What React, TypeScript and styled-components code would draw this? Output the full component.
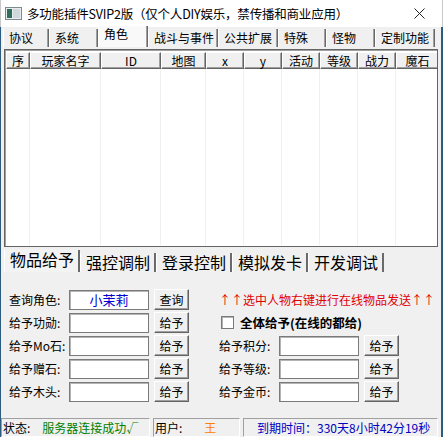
import styled, { createGlobalStyle } from 'styled-components';

const GlobalStyle = createGlobalStyle`
  html, body { margin: 0; padding: 0; background: #f0f0f0; }
  body { font-family: "Noto Sans CJK SC", "Noto Sans", sans-serif; }
  * { box-sizing: border-box; }
`;

const Window = styled.div`
  width: 443px;
  height: 437px;
  display: flex;
  flex-direction: column;
  background: #f0f0f0;
  overflow: hidden;
`;

const TitleBar = styled.div`
  height: 27px;
  flex: none;
  display: flex;
  align-items: center;
  background: #fff;
  padding-left: 4px;
  border-left: 1px solid #c8c8c8;
  border-right: 1px solid #c8c8c8;
`;

const TitleText = styled.div`
  margin-left: 5px;
  font-size: 12.5px;
  line-height: 16px;
  color: #000;
  white-space: nowrap;
  letter-spacing: -0.2px;
`;

const CloseBox = styled.div`
  margin-left: auto;
  width: 46px;
  height: 27px;
  display: flex;
  align-items: center;
  justify-content: center;
`;

const Body = styled.div`
  flex: 1;
  display: flex;
  flex-direction: column;
  border-left: 1px solid #2b5c80;
  border-right: 2px solid #2b5c80;
  min-height: 0;
`;

const TabStrip = styled.div`
  height: 20px;
  flex: none;
  display: flex;
  align-items: flex-end;
  padding-left: 2px;
`;

const TopTab = styled.div<{ $w: number; $active?: boolean }>`
  width: ${p => p.$w}px;
  height: ${p => (p.$active ? 21 : 18)}px;
  padding-left: 5px;
  font-size: 12px;
  line-height: ${p => (p.$active ? 16 : 18)}px;
  white-space: nowrap;
  background: ${p => (p.$active ? '#f9f9f9' : '#f0f0f0')};
  border-left: 1px solid #fff;
  border-right: 1px solid #6a6a6a;
  box-shadow: inset -1px 0 0 #a0a0a0;
  color: #000;
`;

const TableBox = styled.div`
  margin: 2px 3px 0 3px;
  height: 198px;
  flex: none;
  background: #fff;
  border: 1px solid #646464;
  box-shadow: inset 1px 1px 0 #a0a0a0;
  padding: 2px 1px 1px 1px;
  display: flex;
  flex-direction: column;
  overflow: hidden;
`;

const HeaderRow = styled.div`
  display: flex;
  height: 17px;
  flex: none;
`;

const HeadCell = styled.div<{ $w: number }>`
  width: ${p => p.$w}px;
  flex: none;
  font-size: 12px;
  line-height: 15px;
  text-align: center;
  background: #f0f0f0;
  border-top: 1px solid #fff;
  border-left: 1px solid #fff;
  border-right: 1px solid #646464;
  border-bottom: 1px solid #646464;
  box-shadow: inset -1px -1px 0 #a0a0a0;
  font-family: "Noto Sans CJK SC", "Liberation Mono", monospace;
`;

const GridBody = styled.div`
  flex: 1;
  display: flex;
`;

const GridCol = styled.div<{ $w: number }>`
  width: ${p => p.$w}px;
  flex: none;
  border-right: 1px solid #f0f0f0;
`;

const BottomTabs = styled.div`
  height: 25px;
  flex: none;
  display: flex;
  align-items: flex-end;
  padding-left: 3px;
`;

const BigTab = styled.div<{ $active?: boolean }>`
  height: ${p => (p.$active ? 22 : 19)}px;
  padding: 0 4px 0 5px;
  font-size: 16px;
  line-height: ${p => (p.$active ? 18 : 19)}px;
  white-space: nowrap;
  color: #000;
  background: ${p => (p.$active ? '#f3f3f3' : '#f0f0f0')};
  border-right: 2px solid #6a6a6a;
  border-left: 1px solid #fff;
`;

const Panel = styled.div`
  flex: 1;
  display: flex;
  padding: 16px 0 0 8px;
  gap: 30px;
`;

const Column = styled.div`
  display: flex;
  flex-direction: column;
`;

const Row = styled.div`
  height: 23px;
  display: flex;
  align-items: center;
`;

const Label = styled.div`
  width: 60px;
  font-size: 12px;
  line-height: 16px;
  white-space: nowrap;
  color: #000;
`;

const Field = styled.div<{ $color?: string }>`
  width: 80px;
  height: 20px;
  background: #fff;
  border: 1px solid #7a7a7a;
  box-shadow: inset 1px 1px 0 #b4b4b4;
  font-size: 13px;
  line-height: 18px;
  text-align: center;
  color: ${p => p.$color || '#000'};
`;

const Button = styled.button`
  margin-left: 5px;
  width: 35px;
  height: 21px;
  padding: 0;
  font-family: inherit;
  font-size: 12px;
  line-height: 17px;
  color: #000;
  background: #f0f0f0;
  border: 1px solid;
  border-color: #fff #646464 #646464 #fff;
  box-shadow: inset -1px -1px 0 #a0a0a0;
`;

const Notice = styled.div`
  font-size: 12px;
  line-height: 16px;
  color: #e00000;
  white-space: nowrap;
  padding-top: 1px;
`;

const CheckRow = styled(Row)`
  gap: 6px;
  padding-left: 2px;
`;

const CheckBox = styled.div`
  width: 13px;
  height: 13px;
  background: #fff;
  border: 1px solid #7a7a7a;
  box-shadow: inset 1px 1px 0 #b4b4b4;
`;

const BoldLabel = styled.div`
  font-size: 12.5px;
  font-weight: bold;
  line-height: 16px;
  color: #000;
`;

const StatusBar = styled.div`
  height: 19px;
  flex: none;
  display: flex;
  gap: 3px;
  padding: 0 1px 0 0;
`;

const StatusPane = styled.div<{ $w: number }>`
  width: ${p => p.$w}px;
  flex: none;
  display: flex;
  align-items: center;
  font-size: 12px;
  line-height: 16px;
  white-space: nowrap;
  border-top: 1px solid #a0a0a0;
  border-left: 1px solid #a0a0a0;
  border-right: 1px solid #fff;
  border-bottom: 1px solid #fff;
  padding-left: 1px;
`;

const StatusText = styled.span<{ $color?: string; $gap?: number }>`
  color: ${p => p.$color || '#000'};
  margin-left: ${p => p.$gap || 0}px;
`;

const topTabs: [string, number][] = [
  ['协议', 46],
  ['系统', 49],
  ['角色', 50],
  ['战斗与事件', 70],
  ['公共扩展', 60],
  ['特殊', 48],
  ['怪物', 49],
  ['定制功能', 60],
];

const columns: [string, number][] = [
  ['序', 24],
  ['玩家名字', 71],
  ['ID', 60],
  ['地图', 45],
  ['x', 38],
  ['y', 38],
  ['活动', 38],
  ['等级', 38],
  ['战力', 38],
  ['魔石', 43],
];

const bottomTabs = ['物品给予', '强控调制', '登录控制', '模拟发卡', '开发调试'];

const AppIcon = () => (
  <svg width="17" height="13" viewBox="0 0 17 13">
    <rect x="0.5" y="0.5" width="16" height="12" fill="#e8eef0" stroke="#7d8a90" />
    <rect x="2" y="2" width="5" height="9" fill="#2f6f5a" />
    <rect x="8" y="2" width="7" height="9" fill="#cfd8dc" />
  </svg>
);

const CloseIcon = () => (
  <svg width="11" height="11" viewBox="0 0 11 11">
    <path d="M0.5 0.5 L10.5 10.5 M10.5 0.5 L0.5 10.5" stroke="#222" strokeWidth="1" />
  </svg>
);

export default function App() {
  return (
    <Window>
      <GlobalStyle />
      <TitleBar>
        <AppIcon />
        <TitleText>多功能插件SVIP2版（仅个人DIY娱乐，禁传播和商业应用）</TitleText>
        <CloseBox>
          <CloseIcon />
        </CloseBox>
      </TitleBar>
      <Body>
        <TabStrip>
          {topTabs.map(([name, w]) => (
            <TopTab key={name} $w={w} $active={name === '角色'}>
              {name}
            </TopTab>
          ))}
        </TabStrip>

        <TableBox>
          <HeaderRow>
            {columns.map(([name, w]) => (
              <HeadCell key={name} $w={w}>
                {name}
              </HeadCell>
            ))}
          </HeaderRow>
          <GridBody>
            {columns.map(([name, w]) => (
              <GridCol key={name} $w={w} />
            ))}
          </GridBody>
        </TableBox>

        <BottomTabs>
          {bottomTabs.map(name => (
            <BigTab key={name} $active={name === '物品给予'}>
              {name}
            </BigTab>
          ))}
        </BottomTabs>

        <Panel>
          <Column>
            <Row>
              <Label>查询角色:</Label>
              <Field $color="#0000d0">小茉莉</Field>
              <Button>查询</Button>
            </Row>
            <Row>
              <Label>给予功勋:</Label>
              <Field />
              <Button>给予</Button>
            </Row>
            <Row>
              <Label>给予Mo石:</Label>
              <Field />
              <Button>给予</Button>
            </Row>
            <Row>
              <Label>给予赠石:</Label>
              <Field />
              <Button>给予</Button>
            </Row>
            <Row>
              <Label>给予木头:</Label>
              <Field />
              <Button>给予</Button>
            </Row>
          </Column>
          <Column>
            <Row>
              <Notice>↑↑选中人物右键进行在线物品发送↑↑</Notice>
            </Row>
            <CheckRow>
              <CheckBox />
              <BoldLabel>全体给予(在线的都给)</BoldLabel>
            </CheckRow>
            <Row>
              <Label>给予积分:</Label>
              <Field />
              <Button>给予</Button>
            </Row>
            <Row>
              <Label>给予等级:</Label>
              <Field />
              <Button>给予</Button>
            </Row>
            <Row>
              <Label>给予金币:</Label>
              <Field />
              <Button>给予</Button>
            </Row>
          </Column>
        </Panel>

        <StatusBar>
          <StatusPane $w={149}>
            <StatusText>状态:</StatusText>
            <StatusText $color="#008000" $gap={12}>服务器连接成功√</StatusText>
          </StatusPane>
          <StatusPane $w={87}>
            <StatusText>用户:</StatusText>
            <StatusText $color="#ff8000" $gap={22}>王</StatusText>
          </StatusPane>
          <StatusPane $w={195}>
            <StatusText $color="#0000c0" $gap={12}>到期时间：330天8小时42分19秒</StatusText>
          </StatusPane>
        </StatusBar>
      </Body>
    </Window>
  );
}
